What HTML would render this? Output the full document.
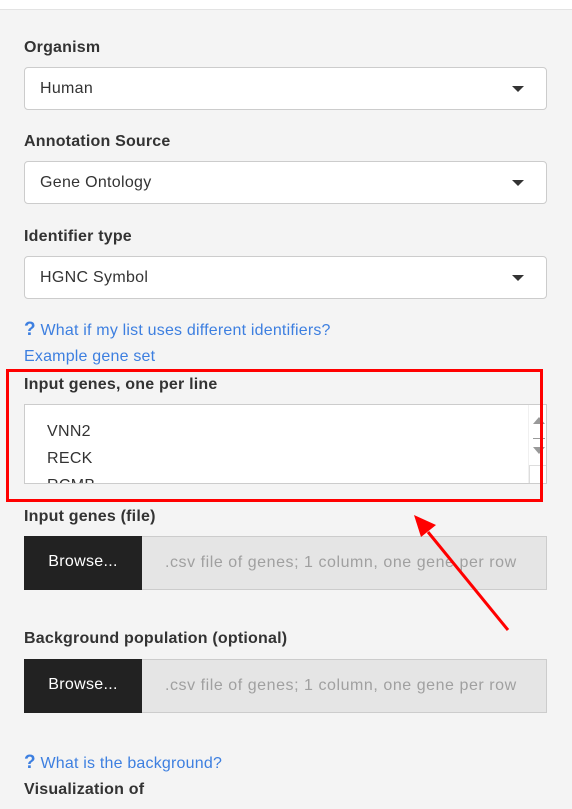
<!DOCTYPE html>
<html><head><meta charset="utf-8"><style>
*{box-sizing:border-box;margin:0;padding:0}
body{width:572px;height:785px;overflow:hidden;background:#fff;font-family:"Liberation Sans",sans-serif;color:#333;position:relative}
.panel{position:absolute;left:0;top:9px;width:572px;height:800px;background:#f4f4f4;border-top:1px solid #e3e3e3}
.lbl{position:absolute;left:24px;font-weight:bold;font-size:16px;color:#333;letter-spacing:0.2px}
.sel{position:absolute;left:24px;width:523px;height:43px;background:#fff;border:1px solid #ccc;border-radius:4px;font-size:16px;padding-left:15px;line-height:41px;color:#333;letter-spacing:0.3px}
.sel:after{content:"";position:absolute;right:22px;top:18px;border-left:6px solid transparent;border-right:6px solid transparent;border-top:6px solid #333}
.link{position:absolute;left:24px;font-size:16px;color:#3d7fe0;letter-spacing:0.2px}
.link b{font-size:19px}
.file{position:absolute;left:24px;width:523px;height:54px;border:1px solid #ccc;background:#e5e5e5}
.file .btn{position:absolute;left:-1px;top:-1px;width:118px;height:54px;background:#222;color:#fff;font-size:16px;line-height:52px;text-align:center;letter-spacing:0.3px}
.file .ph{position:absolute;left:140px;top:0;line-height:52px;font-size:16px;color:#a0a0a0;letter-spacing:0.55px}
</style></head><body>
<div class="panel"></div>
<div class="lbl" style="top:39px">Organism</div>
<div class="sel" style="top:67px">Human</div>
<div class="lbl" style="top:133px">Annotation Source</div>
<div class="sel" style="top:161px">Gene Ontology</div>
<div class="lbl" style="top:228px">Identifier type</div>
<div class="sel" style="top:256px">HGNC Symbol</div>
<div class="link" style="top:319px"><b>?</b> What if my list uses different identifiers?</div>
<div class="link" style="top:348px">Example gene set</div>
<div class="lbl" style="top:376px">Input genes, one per line</div>
<div style="position:absolute;left:24px;top:404px;width:523px;height:80px;background:#fff;border:1px solid #ccc;overflow:hidden">
 <div style="position:absolute;left:22px;top:13px;font-size:16px;line-height:27px;color:#333;letter-spacing:0.3px">VNN2<br>RECK<br>RCMB</div>
 <div style="position:absolute;right:0;top:0;width:18px;height:78px;background:#fff;border-left:1px solid #f0f0f0">
  <div style="position:absolute;left:4px;top:12px;border-left:6px solid transparent;border-right:6px solid transparent;border-bottom:7px solid #999"></div>
  <div style="position:absolute;left:4px;top:33px;width:12px;height:1px;background:#999"></div>
  <div style="position:absolute;left:4px;top:42px;border-left:6px solid transparent;border-right:6px solid transparent;border-top:7px solid #999"></div>
  <div style="position:absolute;left:0;top:60px;width:18px;height:18px;border-top:1px solid #ddd;border-left:1px solid #ddd"></div>
 </div>
</div>
<div style="position:absolute;left:6px;top:369px;width:537px;height:133px;border:3px solid #f00"></div>
<div class="lbl" style="top:508px">Input genes (file)</div>
<div class="file" style="top:536px"><div class="btn">Browse...</div><div class="ph">.csv file of genes; 1 column, one gene per row</div></div>
<div class="lbl" style="top:630px">Background population (optional)</div>
<div class="file" style="top:659px"><div class="btn">Browse...</div><div class="ph">.csv file of genes; 1 column, one gene per row</div></div>
<div class="link" style="top:752px"><b>?</b> What is the background?</div>
<div class="lbl" style="top:781px">Visualization of</div>
<svg style="position:absolute;left:0;top:0" width="572" height="785">
<line x1="508" y1="630" x2="428" y2="532" stroke="#f00" stroke-width="3"/>
<polygon points="414,515 436,525 421,537" fill="#f00"/>
</svg>
</body></html>
